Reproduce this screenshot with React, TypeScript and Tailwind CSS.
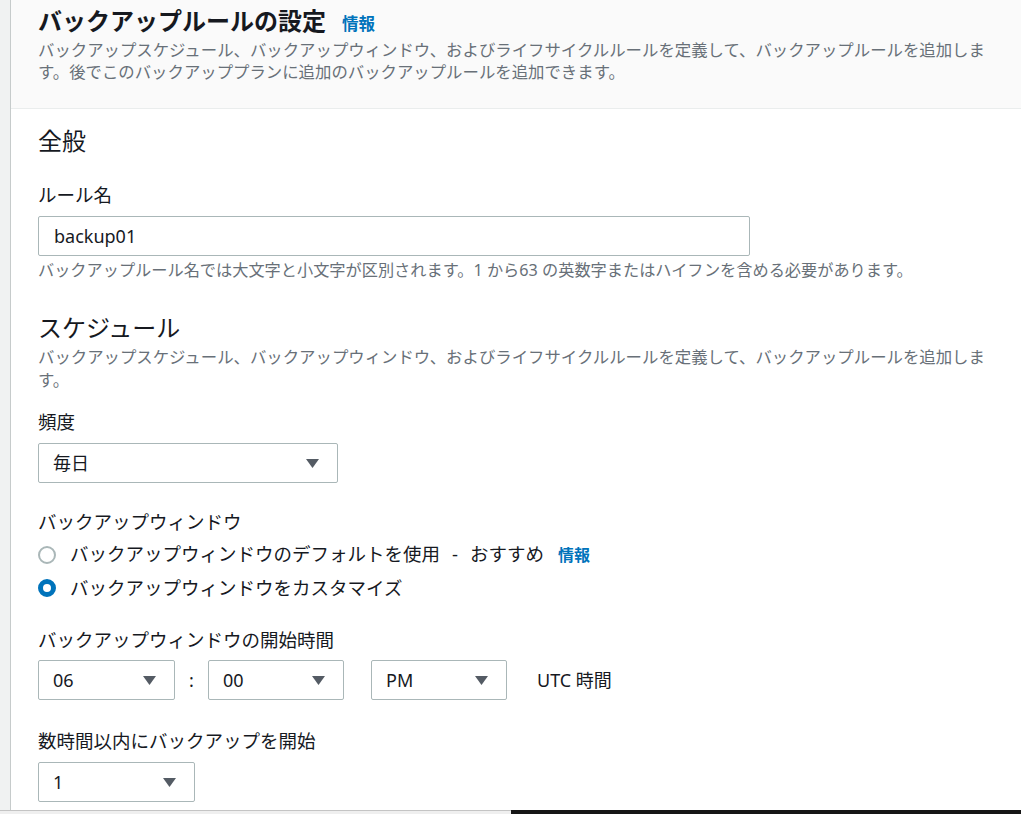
function Caret() {
    return (
        <svg width="13" height="9" viewBox="0 0 13 9" className="shrink-0">
            <path d="M0 0 H13 L6.5 9 Z" fill="#545b64" />
        </svg>
    );
}

function Select({ value, width }: { value: string; width: string }) {
    return (
        <div
            className={`${width} h-[40px] flex items-center justify-between pl-[14px] pr-[18px] border border-[#aab7b8] rounded-[2px] bg-white text-[18px] text-[#16191f]`}
        >
            <span>{value}</span>
            <Caret />
        </div>
    );
}

function Radio({ checked, children }: { checked?: boolean; children: React.ReactNode }) {
    return (
        <div className="h-[33px] flex items-center">
            {checked ? (
                <span className="w-[18px] h-[18px] rounded-full border-[5px] border-[#0073bb] bg-white shrink-0" />
            ) : (
                <span className="w-[18px] h-[18px] rounded-full border-2 border-[#aab7b8] bg-white shrink-0" />
            )}
            <span className="ml-[14px] text-[18.5px] leading-[26px] text-[#16191f] flex items-baseline">
                {children}
            </span>
        </div>
    );
}

const desc =
    "バックアップスケジュール、バックアップウィンドウ、およびライフサイクルルールを定義して、バックアップルールを追加します。";

export default function App() {
    return (
        <div
            className="h-[814px] w-full flex flex-col overflow-hidden bg-white text-[#16191f]"
            style={{ fontFamily: '"Noto Sans", "Noto Sans CJK JP", sans-serif' }}
        >
            <div className="flex flex-1 min-h-0">
                {/* 左の帯 */}
                <div className="w-[11px] shrink-0 bg-[#f0f2f2] border-r border-[#c6cbcb]" />

                <div className="flex-1 min-w-0 flex flex-col">
                    {/* ヘッダー */}
                    <div className="bg-[#fafafa] border-b border-[#eaeded] pt-[5px] pb-[25px] pl-[27px] pr-[8px]">
                        <div className="flex items-baseline gap-[16px]">
                            <h2 className="text-[24px] leading-[32px] font-bold">バックアップルールの設定</h2>
                            <a className="text-[16.5px] font-bold text-[#0073bb]">情報</a>
                        </div>
                        <p className="mt-[2px] text-[16.4px] leading-[22px] text-[#687078]">
                            バックアップスケジュール、バックアップウィンドウ、およびライフサイクルルールを定義して、バックアップルールを追加します。後でこのバックアッププランに追加のバックアップルールを追加できます。
                        </p>
                    </div>

                    {/* 本文 */}
                    <div className="pt-[16px] pl-[27px] pr-[8px]">
                        <h3 className="text-[24px] leading-[32px]">全般</h3>

                        <div className="mt-[25px] text-[18.5px] leading-[26px]">ルール名</div>
                        <div className="mt-[8px] w-[712px] h-[40px] flex items-center pl-[15px] border border-[#aab7b8] rounded-[2px] text-[18px]">
                            backup01
                        </div>
                        <p className="mt-[3px] text-[16.2px] leading-[22px] text-[#687078]">
                            バックアップルール名では大文字と小文字が区別されます。1 から63 の英数字またはハイフンを含める必要があります。
                        </p>

                        <h3 className="mt-[31px] text-[24px] leading-[32px]">スケジュール</h3>
                        <p className="mt-[1px] text-[16.4px] leading-[23px] text-[#687078]">{desc}</p>

                        <div className="mt-[18px] text-[18.5px] leading-[26px]">頻度</div>
                        <div className="mt-[8px]">
                            <Select value="毎日" width="w-[300px]" />
                        </div>

                        <div className="mt-[26px] text-[18.5px] leading-[26px]">バックアップウィンドウ</div>
                        <div className="mt-[3px]">
                            <Radio>
                                バックアップウィンドウのデフォルトを使用
                                <span className="mx-[12px]">-</span>
                                おすすめ
                                <a className="ml-[14px] text-[16px] font-bold text-[#0073bb]">情報</a>
                            </Radio>
                            <Radio checked>バックアップウィンドウをカスタマイズ</Radio>
                        </div>

                        <div className="mt-[23px] text-[18.5px] leading-[26px]">バックアップウィンドウの開始時間</div>
                        <div className="mt-[7px] flex items-center">
                            <Select value="06" width="w-[137px]" />
                            <span className="w-[33px] text-center text-[18px]">:</span>
                            <Select value="00" width="w-[136px]" />
                            <div className="w-[27px]" />
                            <Select value="PM" width="w-[136px]" />
                            <span className="ml-[30px] text-[18px]">UTC 時間</span>
                        </div>

                        <div className="mt-[28px] text-[18.5px] leading-[26px]">数時間以内にバックアップを開始</div>
                        <div className="mt-[8px]">
                            <Select value="1" width="w-[157px]" />
                        </div>
                    </div>
                </div>
            </div>

            {/* 下の帯 */}
            <div className="h-[4px] shrink-0 flex">
                <div className="w-[511px] bg-[#efefef] border-t border-[#c4c4c4]" />
                <div className="flex-1 bg-[#161616]" />
            </div>
        </div>
    );
}
